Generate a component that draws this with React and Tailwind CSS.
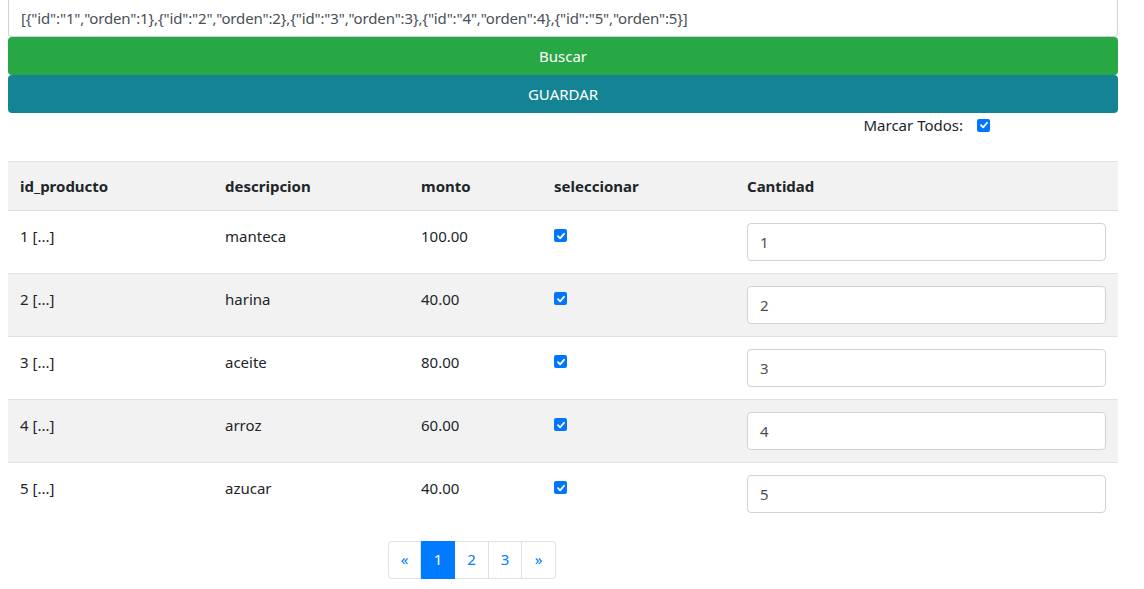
import { useState } from 'react';

const productos = [
  { id: 1, descripcion: 'manteca', monto: '100.00' },
  { id: 2, descripcion: 'harina', monto: '40.00' },
  { id: 3, descripcion: 'aceite', monto: '80.00' },
  { id: 4, descripcion: 'arroz', monto: '60.00' },
  { id: 5, descripcion: 'azucar', monto: '40.00' },
];

function Check() {
  return (
    <span className="flex w-[13px] h-[13px] rounded-[2px] bg-[#0075ff] items-center justify-center">
      <svg width="10" height="10" viewBox="0 0 10 10" fill="none">
        <path d="M2 5.2 L4.1 7.3 L8 2.8" stroke="white" strokeWidth="1.8" strokeLinecap="round" strokeLinejoin="round" />
      </svg>
    </span>
  );
}

export default function App() {
  const [json] = useState(JSON.stringify(productos.map((p) => ({ id: String(p.id), orden: p.id }))));

  return (
    <div className="w-[1144px] h-[589px] overflow-hidden bg-white text-[#212529] text-[15px] font-['Noto_Sans','Open_Sans',sans-serif]">
      <div className="ml-2 w-[1110px]">
        <div className="h-[37px] border border-t-0 border-[#ced4da] rounded-b-[4px] px-3 flex items-center">
          <span className="text-[#495057] tracking-[-0.15px]">{json}</span>
        </div>
        <button className="w-full h-[38px] bg-[#28a745] text-white rounded-[4px] flex items-center justify-center">Buscar</button>
        <button className="w-full h-[38px] bg-[#148494] text-white rounded-[4px] flex items-center justify-center">GUARDAR</button>
        <div className="h-[24px] flex items-center justify-end pr-[128px] gap-[14px]">
          <span>Marcar Todos:</span>
          <Check />
        </div>
        <div className="h-[24px]" />
        <table className="w-full border-collapse">
          <thead>
            <tr className="bg-[#f2f2f2] border-t border-[#dee2e6] h-[49px] text-left">
              <th className="w-[205px] px-3 font-bold">id_producto</th>
              <th className="w-[196px] px-3 font-bold">descripcion</th>
              <th className="w-[133px] px-3 font-bold">monto</th>
              <th className="w-[193px] px-3 font-bold">seleccionar</th>
              <th className="px-3 font-bold">Cantidad</th>
            </tr>
          </thead>
          <tbody>
            {productos.map((p, i) => (
              <tr key={p.id} className={`border-t border-[#dee2e6] h-[63px] align-top ${i % 2 === 1 ? 'bg-[#f2f2f2]' : 'bg-white'}`}>
                <td className="px-3 pt-[14px]">{p.id} [...]</td>
                <td className="px-3 pt-[14px]">{p.descripcion}</td>
                <td className="px-3 pt-[14px]">{p.monto}</td>
                <td className="px-3 pt-[18px]"><Check /></td>
                <td className="px-3 pt-[12px]">
                  <div className="h-[38px] bg-white border border-[#ced4da] rounded-[4px] px-3 flex items-center text-[#495057]">{i + 1}</div>
                </td>
              </tr>
            ))}
          </tbody>
        </table>
        <div className="mt-[15px] ml-[380px] flex h-[38px] text-[#007bff]">
          <span className="w-[33px] border border-[#dee2e6] rounded-l-[4px] flex items-center justify-center">«</span>
          <span className="w-[34px] bg-[#007bff] text-white flex items-center justify-center">1</span>
          <span className="w-[34px] border border-l-0 border-[#dee2e6] flex items-center justify-center">2</span>
          <span className="w-[33px] border border-l-0 border-[#dee2e6] flex items-center justify-center">3</span>
          <span className="w-[34px] border border-l-0 border-[#dee2e6] rounded-r-[4px] flex items-center justify-center">»</span>
        </div>
      </div>
    </div>
  );
}
